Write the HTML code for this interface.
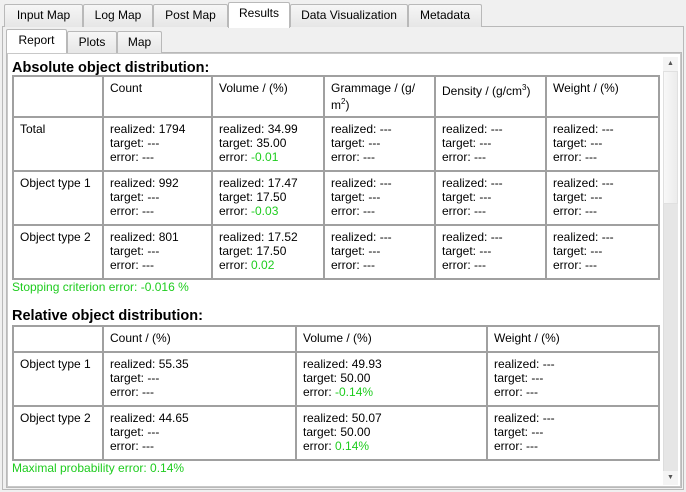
<!DOCTYPE html>
<html><head><meta charset="utf-8"><style>
*{box-sizing:border-box;margin:0;padding:0}
body{width:686px;height:492px;background:#f0f0f0;font-family:"Liberation Sans","DejaVu Sans",sans-serif;font-size:12px;color:#000;position:relative;overflow:hidden}
.tab{position:absolute;height:23px;border:1px solid #b9b9b9;border-bottom:none;background:linear-gradient(#f6f6f6,#e6e6e6);font-size:12px;text-align:center;line-height:21px;border-radius:2px 2px 0 0}
.sel{background:#fff;height:26px}
.pane{position:absolute;border:1px solid #b9b9b9;background:#fff}
.tb{position:absolute;border-collapse:collapse;table-layout:fixed}
.tb td{border:2px solid #a0a0a0;vertical-align:top;padding:4px 6px;line-height:14px;white-space:nowrap;font-size:12px}
.g{color:#1ecc1e}
h{position:absolute;font-weight:bold;font-size:14.5px;left:12px}
.note{position:absolute;left:12px;color:#1ecc1e;font-size:12px}
</style></head><body>
<div class="pane" style="left:2px;top:26px;width:682px;height:464px;background:#f0f0f0"></div>
<div class="tab" style="left:4px;top:4px;width:79px">Input Map</div>
<div class="tab" style="left:83px;top:4px;width:70px">Log Map</div>
<div class="tab" style="left:153px;top:4px;width:75px">Post Map</div>
<div class="tab" style="left:290px;top:4px;width:118px">Data Visualization</div>
<div class="tab" style="left:408px;top:4px;width:74px">Metadata</div>
<div class="tab sel" style="left:228px;top:2px;width:62px;border-bottom:none">Results</div>
<div class="pane" style="left:6px;top:52px;width:676px;height:436px;background:#fff"></div>
<div class="tab" style="left:67px;top:31px;width:50px">Plots</div>
<div class="tab" style="left:117px;top:31px;width:45px">Map</div>
<div class="tab sel" style="left:6px;top:29px;width:61px;height:24px">Report</div>
<div style="position:absolute;left:7px;top:53px;width:674px;height:434px;border:1px solid #c8c8c8;background:#fff"></div>
<div style="position:absolute;left:663px;top:57px;width:15px;height:428px;background:#e6e6e6;border-left:1px solid #ddd"></div>
<div style="position:absolute;left:663px;top:57px;width:15px;height:14px;background:#f4f4f4;font-size:7px;text-align:center;line-height:14px;color:#555">▲</div>
<div style="position:absolute;left:663px;top:71px;width:15px;height:133px;background:linear-gradient(90deg,#f8f8f8,#ececec);border:1px solid #e0e0e0"></div>
<div style="position:absolute;left:663px;top:471px;width:15px;height:14px;background:#f4f4f4;font-size:7px;text-align:center;line-height:14px;color:#555">▼</div>

<h style="top:60px">Absolute object distribution:</h>
<table class="tb" style="left:12px;top:75px;width:646px">
<colgroup><col style="width:90px"><col style="width:109px"><col style="width:112px"><col style="width:111px"><col style="width:111px"><col style="width:113px"></colgroup>
<tr style="height:41px"><td></td><td>Count</td><td>Volume / (%)</td><td>Grammage / (g/<br>m<sup style="font-size:8px">2</sup>)</td><td>Density / (g/cm<sup style="font-size:8px">3</sup>)</td><td>Weight / (%)</td></tr>
<tr style="height:54px"><td>Total</td><td>realized: 1794<br>target: ---<br>error: ---</td><td>realized: 34.99<br>target: 35.00<br>error: <span class="g">-0.01</span></td><td>realized: ---<br>target: ---<br>error: ---</td><td>realized: ---<br>target: ---<br>error: ---</td><td>realized: ---<br>target: ---<br>error: ---</td></tr>
<tr style="height:54px"><td>Object type 1</td><td>realized: 992<br>target: ---<br>error: ---</td><td>realized: 17.47<br>target: 17.50<br>error: <span class="g">-0.03</span></td><td>realized: ---<br>target: ---<br>error: ---</td><td>realized: ---<br>target: ---<br>error: ---</td><td>realized: ---<br>target: ---<br>error: ---</td></tr>
<tr style="height:54px"><td>Object type 2</td><td>realized: 801<br>target: ---<br>error: ---</td><td>realized: 17.52<br>target: 17.50<br>error: <span class="g">0.02</span></td><td>realized: ---<br>target: ---<br>error: ---</td><td>realized: ---<br>target: ---<br>error: ---</td><td>realized: ---<br>target: ---<br>error: ---</td></tr>
</table>
<div class="note" style="top:280px">Stopping criterion error: -0.016 %</div>

<h style="top:308px">Relative object distribution:</h>
<table class="tb" style="left:12px;top:325px;width:646px">
<colgroup><col style="width:90px"><col style="width:193px"><col style="width:191px"><col style="width:172px"></colgroup>
<tr style="height:26px"><td></td><td>Count / (%)</td><td>Volume / (%)</td><td>Weight / (%)</td></tr>
<tr style="height:54px"><td>Object type 1</td><td>realized: 55.35<br>target: ---<br>error: ---</td><td>realized: 49.93<br>target: 50.00<br>error: <span class="g">-0.14%</span></td><td>realized: ---<br>target: ---<br>error: ---</td></tr>
<tr style="height:54px"><td>Object type 2</td><td>realized: 44.65<br>target: ---<br>error: ---</td><td>realized: 50.07<br>target: 50.00<br>error: <span class="g">0.14%</span></td><td>realized: ---<br>target: ---<br>error: ---</td></tr>
</table>
<div class="note" style="top:461px">Maximal probability error: 0.14%</div>
</body></html>
